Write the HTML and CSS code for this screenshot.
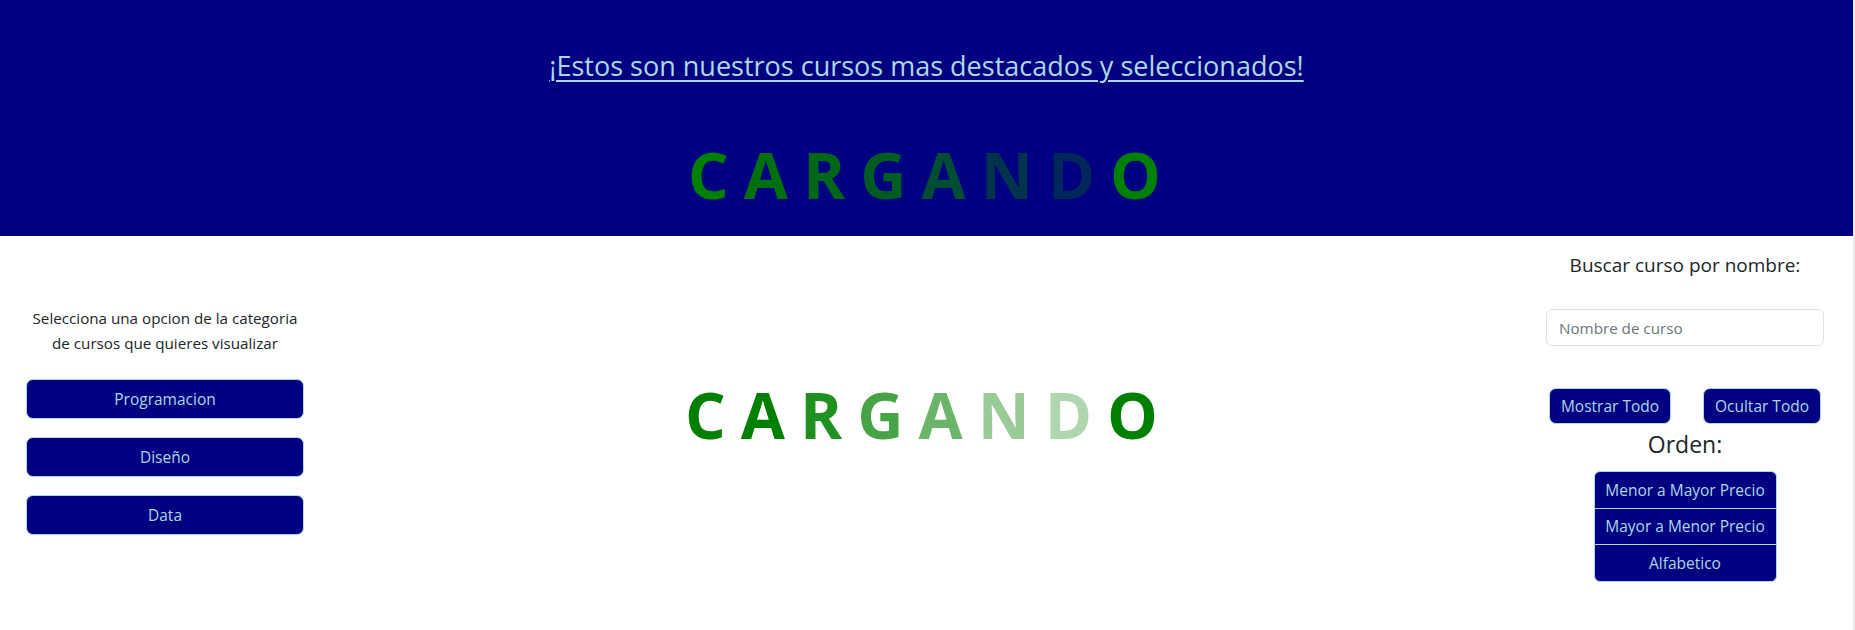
FILE: index.html
```html
<!DOCTYPE html>
<html lang="es">
<head>
<meta charset="utf-8">
<title>Cursos</title>
<link rel="stylesheet" href="styles.css">
</head>
<body>
<div class="page">
  <header class="hero">
    <h1 class="hero-title"><a href="#">¡Estos son nuestros cursos mas destacados y seleccionados!</a></h1>
    <div class="loader loader-dark">
      <span class="o100">C</span><span class="o90">A</span><span class="o82">R</span><span class="o72">G</span><span class="o62">A</span><span class="o40">N</span><span class="o30">D</span><span class="o100">O</span>
    </div>
  </header>
  <main class="main">
    <aside class="categories">
      <p class="categories-text">Selecciona una opcion de la categoria de cursos que quieres visualizar</p>
      <button class="btn btn-wide">Programacion</button>
      <button class="btn btn-wide">Diseño</button>
      <button class="btn btn-wide">Data</button>
    </aside>
    <section class="content">
      <div class="loader loader-light">
        <span class="o100">C</span><span class="o100">A</span><span class="o87">R</span><span class="o72">G</span><span class="o58">A</span><span class="o40">N</span><span class="o31">D</span><span class="o100">O</span>
      </div>
    </section>
    <aside class="tools">
      <label class="search-label" for="search">Buscar curso por nombre:</label>
      <input class="search-input" id="search" type="text" placeholder="Nombre de curso">
      <div class="toggle-row">
        <button class="btn btn-show">Mostrar Todo</button>
        <button class="btn btn-hide">Ocultar Todo</button>
      </div>
      <div class="order-title">Orden:</div>
      <div class="order-group">
        <button class="btn order-btn">Menor a Mayor Precio</button>
        <button class="btn order-btn">Mayor a Menor Precio</button>
        <button class="btn order-btn">Alfabetico</button>
      </div>
    </aside>
  </main>
</div>
</body>
</html>
```

FILE: styles.css
```css
html, body {
  margin: 0;
  padding: 0;
  background: #ffffff;
}

body {
  font-family: "Open Sans", "Noto Sans", "DejaVu Sans", sans-serif;
  color: #212529;
}

.page {
  min-height: 630px;
  border-right: 2px solid #ececec;
}

.hero {
  background: #000080;
  height: 236px;
  box-sizing: border-box;
  padding-top: 48px;
  text-align: center;
}

.hero-title {
  margin: 0;
  font-size: 27px;
  line-height: 36px;
  font-weight: 400;
}

.hero-title a {
  color: #add8e6;
  text-decoration: underline;
  text-decoration-thickness: 2px;
  text-underline-offset: 4px;
}

.loader {
  font-family: "Open Sans", sans-serif;
  font-weight: 700;
  font-size: 64px;
  line-height: 88px;
  letter-spacing: 15px;
  padding-left: 11px;
  color: #008000;
  text-align: center;
}

.loader-dark {
  margin-top: 47px;
}

.o100 { opacity: 1; }
.o90 { opacity: 0.88; }
.o87 { opacity: 0.87; }
.o82 { opacity: 0.8; }
.o72 { opacity: 0.72; }
.o62 { opacity: 0.6; }
.o58 { opacity: 0.58; }
.o40 { opacity: 0.4; }
.o31 { opacity: 0.31; }
.o30 { opacity: 0.3; }

.main {
  display: flex;
  align-items: flex-start;
}

.categories {
  width: 330px;
  flex: none;
  box-sizing: border-box;
  padding: 70px 26px 0;
  display: flex;
  flex-direction: column;
  gap: 18px;
}

.categories-text {
  margin: 0 0 5px;
  font-size: 15.2px;
  line-height: 25px;
  text-align: center;
}

.btn {
  font-family: inherit;
  background: #000080;
  color: #add8e6;
  border: 1px solid #add8e6;
  border-radius: 7px;
  font-size: 15.5px;
  cursor: pointer;
  padding: 0;
}

.btn-wide {
  height: 40px;
  width: 100%;
}

.content {
  flex: 1;
  padding-top: 135px;
}

.tools {
  width: 336px;
  flex: none;
  box-sizing: border-box;
  padding-top: 16px;
  display: flex;
  flex-direction: column;
  align-items: center;
}

.search-label {
  font-size: 19px;
  line-height: 26px;
}

.search-input {
  margin-top: 31px;
  width: 278px;
  height: 37px;
  box-sizing: border-box;
  border: 1px solid #dee2e6;
  border-radius: 6px;
  padding: 0 12px;
  font-family: inherit;
  font-size: 15.2px;
  color: #212529;
}

.search-input::placeholder {
  color: #6c757d;
}

.toggle-row {
  margin-top: 42px;
  display: flex;
  gap: 32px;
}

.btn-show {
  width: 122px;
  height: 36px;
}

.btn-hide {
  width: 118px;
  height: 36px;
}

.order-title {
  margin-top: 6px;
  font-size: 23px;
  line-height: 28px;
}

.order-group {
  margin-top: 13px;
  width: 183px;
  display: flex;
  flex-direction: column;
}

.order-btn {
  height: 37.5px;
  width: 100%;
  border-radius: 0;
}

.order-btn + .order-btn {
  margin-top: -1px;
}

.order-btn:first-child {
  border-radius: 6px 6px 0 0;
}

.order-btn:last-child {
  border-radius: 0 0 6px 6px;
}
```
